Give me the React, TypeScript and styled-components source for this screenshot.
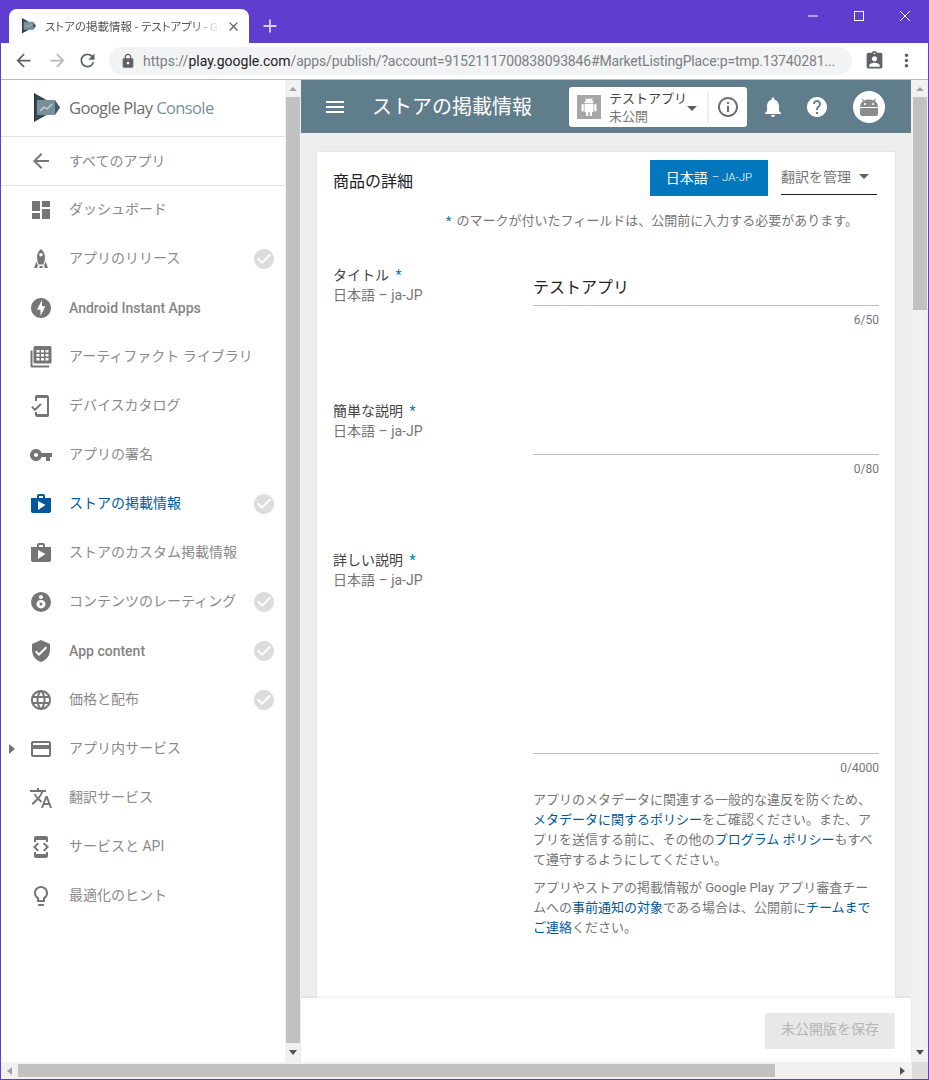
import React from 'react'
import styled, { createGlobalStyle } from 'styled-components'
import {
  MdAdd, MdArrowBack, MdArrowForward, MdAssignmentInd, MdCheckCircle, MdClose,
  MdCreditCard, MdDashboard, MdDeveloperMode, MdHelp, MdInfoOutline, MdLanguage, MdLightbulbOutline,
  MdLock, MdMenu, MdMoreVert, MdNotifications, MdOfflineBolt, MdRefresh, MdShop, MdTranslate,
  MdVerifiedUser, MdVpnKey,
} from 'react-icons/md'

const GlobalStyle = createGlobalStyle`
  html, body { margin: 0; padding: 0; height: 100%; overflow: hidden; }
  body { font-family: Roboto, "Noto Sans CJK JP", sans-serif; font-size: 14px; }
  * { box-sizing: border-box; }
`

const Window = styled.div`
  width: 929px;
  height: 1080px;
  border: 1px solid #5f3dcf;
  display: flex;
  flex-direction: column;
  background: #fff;
  overflow: hidden;
`

const TitleBar = styled.div`
  height: 42px;
  flex: none;
  background: #5f3dcf;
  display: flex;
  align-items: flex-end;
  padding-left: 8px;
`

const Tab = styled.div`
  width: 240px;
  height: 34px;
  background: #fff;
  border-radius: 8px 8px 0 0;
  display: flex;
  align-items: center;
  padding: 0 8px 0 13px;
  color: #5f6368;
`

const TabTitle = styled.div`
  width: 175px;
  margin: 0 6px 0 9px;
  flex: none;
  white-space: nowrap;
  overflow: hidden;
  font-size: 11.5px;
  font-feature-settings: "palt";
  color: #555;
  -webkit-mask-image: linear-gradient(to right, #000 85%, transparent);
  mask-image: linear-gradient(to right, #000 85%, transparent);
`

const NewTab = styled.div`
  width: 42px;
  height: 34px;
  display: flex;
  align-items: center;
  justify-content: center;
  color: #d8d0f4;
  font-size: 22px;
`

const WindowControls = styled.div`
  margin-left: auto;
  align-self: flex-start;
  height: 30px;
  display: flex;
  align-items: center;
  color: #fff;
`

const WindowButton = styled.div`
  width: 46px;
  height: 30px;
  display: flex;
  align-items: center;
  justify-content: center;
`

const Toolbar = styled.div`
  height: 37px;
  flex: none;
  background: #fff;
  border-bottom: 1px solid #b9b9b9;
  display: flex;
  align-items: center;
  padding-bottom: 1px;
`

const NavButton = styled.div<{ $muted?: boolean; $w: number }>`
  width: ${p => p.$w}px;
  display: flex;
  justify-content: center;
  color: ${p => (p.$muted ? '#b8babd' : '#5f6368')};
  font-size: 21px;
  flex: none;
`

const Omnibox = styled.div`
  width: 743px;
  height: 28px;
  margin: 0 4px;
  border-radius: 14px;
  background: #f1f3f4;
  display: flex;
  align-items: center;
  padding-left: 11px;
  gap: 7px;
  font-size: 14px;
  color: #7b7f83;
  white-space: nowrap;
  overflow: hidden;
  flex: none;
`

const Host = styled.span`
  color: #202124;
`

const UrlTail = styled.span`
  letter-spacing: -0.16px;
`

const Viewport = styled.div`
  flex: 1;
  min-height: 0;
  display: flex;
`

const Sidebar = styled.nav`
  width: 284px;
  flex: none;
  background: #fff;
  display: flex;
  flex-direction: column;
`

const LogoRow = styled.div`
  height: 57px;
  flex: none;
  border-bottom: 1px solid #e0e0e0;
  display: flex;
  align-items: center;
  padding: 0 0 1px 33px;
  gap: 9px;
`

const LogoText = styled.div`
  font-family: "Open Sans", sans-serif;
  font-size: 16.5px;
  letter-spacing: -0.6px;
  color: #6d6d6d;
  white-space: nowrap;
`

const LogoAccent = styled.span`
  color: #78909c;
`

const BackRow = styled.div`
  height: 49px;
  flex: none;
  border-bottom: 1px solid #e0e0e0;
  display: flex;
  align-items: center;
  padding: 0 0 1px 28px;
  gap: 16px;
  color: #757575;
  font-size: 14px;
`

const BackLabel = styled.span`
  color: #8a8a8a;
  padding-bottom: 2px;
`

const NavList = styled.div`
  margin-top: -1px;
  display: flex;
  flex-direction: column;
`

const NavRow = styled.div<{ $active?: boolean }>`
  height: 49px;
  flex: none;
  display: flex;
  align-items: center;
  color: ${p => (p.$active ? '#01579b' : '#757575')};
`

const CaretSlot = styled.div`
  width: 28px;
  flex: none;
  display: flex;
  justify-content: flex-start;
  padding-left: 8px;
`

const RightCaret = styled.div`
  width: 0;
  height: 0;
  border-left: 6px solid #757575;
  border-top: 5.5px solid transparent;
  border-bottom: 5.5px solid transparent;
`

const NavIcon = styled.div`
  width: 24px;
  height: 24px;
  flex: none;
  display: flex;
  font-size: 24px;
`

const NavLabel = styled.div<{ $latin?: boolean; $active?: boolean }>`
  margin-left: 16px;
  padding-bottom: ${p => (p.$latin ? 0 : 4)}px;
  flex: 1;
  white-space: nowrap;
  font-size: 14px;
  font-weight: ${p => (p.$latin ? 500 : 400)};
  color: ${p => (p.$active ? '#01579b' : p.$latin ? '#858585' : '#8a8a8a')};
`

const DoneMark = styled.div`
  width: 24px;
  height: 24px;
  margin-right: 9px;
  font-size: 24px;
  color: #dcdcdc;
  display: flex;
`

const VScroll = styled.div<{ $w: number }>`
  width: ${p => p.$w}px;
  flex: none;
  background: #f1f1f1;
  display: flex;
  flex-direction: column;
  align-items: center;
  padding-top: 7px;
`

const UpArrow = styled.div`
  width: 0;
  height: 0;
  flex: none;
  border-left: 4px solid transparent;
  border-right: 4px solid transparent;
  border-bottom: 4px solid #a3a3a3;
`

const DownArrow = styled.div`
  width: 0;
  height: 0;
  flex: none;
  margin-bottom: 7px;
  border-left: 4px solid transparent;
  border-right: 4px solid transparent;
  border-top: 5px solid #505050;
`

const VThumb = styled.div<{ $h: number }>`
  width: 14px;
  height: ${p => p.$h}px;
  flex: none;
  margin-top: 6px;
  background: #c1c1c1;
`

const VSpacer = styled.div`
  flex: 1;
`

const Main = styled.main`
  flex: 1;
  min-width: 0;
  background: #eeeeee;
  display: flex;
  flex-direction: column;
`

const Header = styled.header`
  height: 53px;
  flex: none;
  background: #607d8b;
  display: flex;
  align-items: center;
  padding-left: 22px;
  color: #fff;
`

const HeaderTitle = styled.h1`
  margin: 0 1px 0 25px;
  padding-bottom: 2px;
  width: 196px;
  font-size: 20px;
  font-weight: 400;
  white-space: nowrap;
  color: #fff;
`

const AppChip = styled.div`
  width: 178px;
  height: 40px;
  background: #fff;
  border-radius: 3px;
  display: flex;
  align-items: center;
  padding-left: 8px;
`

const AppThumb = styled.div`
  width: 24px;
  height: 24px;
  background: #a6a6a6;
  color: #fff;
  display: flex;
  align-items: center;
  justify-content: center;
  flex: none;
`

const AppText = styled.div`
  width: 78px;
  margin-left: 8px;
  padding-top: 2px;
  flex: none;
  white-space: nowrap;
  line-height: 18px;
`

const AppName = styled.div`
  font-size: 13px;
  color: #424242;
`

const AppState = styled.div`
  font-size: 13px;
  color: #757575;
`

const DownCaret = styled.div<{ $color: string; $drop?: number }>`
  width: 0;
  height: 0;
  flex: none;
  margin-top: ${p => p.$drop ?? 0}px;
  border-left: 5px solid transparent;
  border-right: 5px solid transparent;
  border-top: 5px solid ${p => p.$color};
`

const ChipDivider = styled.div`
  width: 2px;
  height: 32px;
  background: #eeeeee;
  margin-left: 10px;
  flex: none;
`

const ChipInfo = styled.div`
  font-size: 24px;
  color: #6d6d6d;
  display: flex;
  margin-left: 7px;
`

const HeaderIcon = styled.div<{ $gap: number }>`
  font-size: 24px;
  margin-left: ${p => p.$gap}px;
  display: flex;
  color: #fff;
`

const Avatar = styled.div`
  width: 32px;
  height: 32px;
  border-radius: 50%;
  background: #fff;
  margin-left: 24px;
  color: #8c8c8c;
  display: flex;
  align-items: center;
  justify-content: center;
`

const ContentArea = styled.div`
  flex: 1;
  min-height: 0;
  overflow: hidden;
  padding: 19px 16px 0;
`

const Card = styled.section`
  height: 100%;
  background: #fff;
  box-shadow: 0 0 2px rgba(0, 0, 0, 0.1);
  padding: 8px 16px 0;
`

const CardTop = styled.div`
  display: flex;
  align-items: flex-start;
  height: 36px;
`

const CardTitle = styled.div`
  font-size: 16px;
  color: #212121;
  line-height: 22px;
  margin-top: 11px;
  width: 317px;
`

const LocaleButton = styled.div`
  width: 118px;
  height: 36px;
  padding-bottom: 2px;
  background: #0277bd;
  color: #fff;
  font-size: 14px;
  display: flex;
  align-items: center;
  justify-content: center;
  gap: 4px;
`

const LocaleCode = styled.span`
  font-size: 11.5px;
  font-weight: 300;
`

const ManageSelect = styled.div`
  width: 96px;
  height: 35px;
  margin-left: 13px;
  border-bottom: 1px solid #212121;
  display: flex;
  align-items: center;
  justify-content: space-between;
  padding: 0 8px 2px 0;
  font-size: 14px;
  color: #757575;
`

const RequiredNote = styled.div`
  margin-top: 14px;
  height: 24px;
  padding-right: 21px;
  text-align: right;
  font-size: 13px;
  line-height: 22px;
  color: #757575;
  white-space: nowrap;
`

const Fields = styled.div`
  margin-top: 31px;
  display: flex;
  flex-direction: column;
`

const Field = styled.div`
  display: grid;
  grid-template-columns: 200px 346px;
`

const FieldLabel = styled.div`
  line-height: 20px;
`

const LabelName = styled.div`
  font-size: 14px;
  color: #424242;
`

const Star = styled.span`
  color: #0277bd;
`

const NoteStar = styled(Star)`
  margin-right: 2px;
`

const LabelStar = styled(Star)`
  margin-left: 3px;
`

const LabelLocale = styled.div`
  font-size: 14px;
  color: #757575;
`

const InputBox = styled.div<{ $h: number }>`
  height: ${p => p.$h}px;
  border-bottom: 1px solid #bdbdbd;
  padding-top: 11px;
  font-size: 16px;
  line-height: 24px;
  color: #212121;
`

const Counter = styled.div<{ $tail: number }>`
  height: 20px;
  margin-bottom: ${p => p.$tail}px;
  padding-top: 7px;
  text-align: right;
  font-size: 12px;
  line-height: 15px;
  color: #757575;
`

const HelpParagraph = styled.p`
  margin: 0 0 8px;
  font-size: 13px;
  line-height: 20px;
  color: #757575;
`

const HelpLink = styled.span`
  color: #01579b;
`

const SaveBar = styled.div`
  height: 64px;
  flex: none;
  background: #fff;
  box-shadow: 0 -1px 2px rgba(0, 0, 0, 0.08);
  position: relative;
  display: flex;
  align-items: center;
  justify-content: flex-end;
  padding: 2px 16px 0 0;
`

const SaveButton = styled.div`
  width: 130px;
  height: 36px;
  padding-bottom: 7px;
  background: #e8e8e8;
  border-radius: 2px;
  display: flex;
  align-items: center;
  justify-content: center;
  font-size: 14px;
  color: #b5b5b5;
`

const HScroll = styled.div`
  height: 17px;
  flex: none;
  background: #f1f1f1;
  display: flex;
  align-items: center;
`

const SideArrow = styled.div<{ $dir: 'left' | 'right'; $color: string }>`
  width: 0;
  height: 0;
  flex: none;
  margin: ${p => (p.$dir === 'left' ? '0 6px 0 6px' : '0 0 0 125px')};
  border-top: 4px solid transparent;
  border-bottom: 4px solid transparent;
  ${p => (p.$dir === 'left' ? `border-right: 5px solid ${p.$color};` : `border-left: 5px solid ${p.$color};`)}
`

const HThumb = styled.div`
  width: 757px;
  height: 13px;
  flex: none;
  background: #c1c1c1;
`

const ScrollCorner = styled.div`
  width: 16px;
  height: 17px;
  margin-left: auto;
  background: #dcdcdc;
`

const PlayMark = ({ size }: { size: number }) => (
  <svg width={size} height={(size * 29) / 26} viewBox="0 0 26 29" style={{ flex: 'none' }}>
    <path d="M0 0 L26 14.5 L0 29 Z" fill="#37474f" />
    <path d="M1 1.5 L0 0 L0 29 L1 27 Z" fill="#263238" />
    <rect x="3" y="7" width="18" height="15" fill="#78909c" />
    <path d="M21 7 L26 14.5 L21 22 Z" fill="#455a64" />
    <path d="M6 18 L10 14 L13 16 L18 11" fill="none" stroke="#cfd8dc" strokeWidth="1.2" />
  </svg>
)

const AndroidFull = ({ size }: { size: number }) => (
  <svg width={size} height={size} viewBox="0 0 24 24" fill="currentColor">
    <path d="M6 18c0 .55.45 1 1 1h1v3.500c0 .83.67 1.500 1.500 1.500s1.500-.67 1.500-1.500V19h2v3.500c0 .83.67 1.500 1.500 1.500s1.500-.67 1.500-1.500V19h1c.55 0 1-.45 1-1V8H6v10zM3.500 8C2.670 8 2 8.670 2 9.500v7c0 .83.67 1.500 1.500 1.500S5 17.330 5 16.500v-7C5 8.670 4.330 8 3.500 8zm17 0c-.83 0-1.500.67-1.500 1.500v7c0 .83.67 1.500 1.500 1.500s1.500-.67 1.500-1.500v-7c0-.83-.67-1.500-1.500-1.500zm-4.970-5.840l1.300-1.300c.2-.2.2-.51 0-.71-.2-.2-.51-.2-.71 0l-1.480 1.480C13.850 1.230 12.950 1 12 1c-.96 0-1.860.23-2.660.63L7.850.15c-.2-.2-.51-.2-.71 0-.2.2-.2.51 0 .71l1.310 1.310C6.970 3.260 6 5.010 6 7h12c0-1.990-.97-3.750-2.470-4.840zM10 5H9V4h1v1zm5 0h-1V4h1v1z" />
  </svg>
)

const AndroidBlock = () => (
  <svg width="20" height="20" viewBox="0 0 20 20" fill="currentColor">
    <path d="M1 10c0-2.600 1.300-4.700 3.300-6L3 2.500l.8-.7 1.600 1.700A9 9 0 0 1 10 2.500c1.700 0 3.300.4 4.600 1l1.600-1.700.8.7L15.700 4c2 1.300 3.300 3.400 3.300 6H1z" />
    <path d="M1 11h18v6a2 2 0 0 1-2 2H3a2 2 0 0 1-2-2z" />
    <circle cx="6" cy="7" r="1.100" fill="#fff" />
    <circle cx="14" cy="7" r="1.100" fill="#fff" />
  </svg>
)

const RocketIcon = () => (
  <svg width="24" height="24" viewBox="0 0 24 24" fill="currentColor">
    <path d="M12 2c-2.600 2.200-4 5-4 8.200 0 2.400.5 4.800 1.500 7.300h5c1-2.500 1.500-4.900 1.500-7.300C16 7 14.600 4.200 12 2zm0 7.500a1.800 1.800 0 1 1 0-3.600 1.800 1.800 0 0 1 0 3.600z" />
    <path d="M7.400 14.500 5 21h3.200l.7-2.500zM16.600 14.500 19 21h-3.200l-.7-2.500zM10.500 19h3v2h-3z" />
  </svg>
)

const ArtifactIcon = () => (
  <svg width="24" height="24" viewBox="0 0 24 24" fill="currentColor">
    <path d="M6 1h15a1.500 1.500 0 0 1 1.500 1.500V17a1.500 1.500 0 0 1-1.500 1.500H6A1.500 1.500 0 0 1 4.500 17V2.500A1.500 1.500 0 0 1 6 1z" />
    <path fill="#fff" d="M7.500 5h3v2.500h-3zM12 5h3v2.500h-3zM16.500 5h3v2.500h-3zM7.500 9h3v2.500h-3zM12 9h3v2.500h-3zM16.500 9h3v2.500h-3zM7.500 13h3v2.500h-3zM12 13h3v2.500h-3zM16.500 13h3v2.500h-3z" />
    <path d="M1.500 5.500H3.500V20.500H20V22.500H3A1.500 1.500 0 0 1 1.500 21z" />
  </svg>
)

const DeviceIcon = () => (
  <svg width="24" height="24" viewBox="0 0 24 24" fill="currentColor">
    <path d="M7 1h11a2 2 0 0 1 2 2v18a2 2 0 0 1-2 2H8a2 2 0 0 1-2-2v-3h2v2h10V4H8v3H6V3a2 2 0 0 1 1-2z" />
    <path d="M2.300 13.500 3.600 12.100l2.400 2.400 5.200-5.200 1.400 1.400-6.600 6.600z" />
  </svg>
)

const RatingIcon = () => (
  <svg width="24" height="24" viewBox="0 0 24 24">
    <circle cx="12" cy="12" r="10" fill="currentColor" />
    <circle cx="12" cy="7" r="2.100" fill="#fff" />
    <path d="M12 10c2.800 0 4.500 1.700 4.500 4s-1.700 4.500-4.500 4.500S7.500 16.300 7.500 14 9.200 10 12 10z" fill="#fff" />
    <circle cx="12" cy="14" r="1.500" fill="currentColor" />
  </svg>
)

type NavItem = {
  icon: React.ReactNode
  label: string
  done?: boolean
  latin?: boolean
  active?: boolean
  expandable?: boolean
}

const navItems: NavItem[] = [
  { icon: <MdDashboard />, label: 'ダッシュボード' },
  { icon: <RocketIcon />, label: 'アプリのリリース', done: true },
  { icon: <MdOfflineBolt />, label: 'Android Instant Apps', latin: true },
  { icon: <ArtifactIcon />, label: 'アーティファクト ライブラリ' },
  { icon: <DeviceIcon />, label: 'デバイスカタログ' },
  { icon: <MdVpnKey />, label: 'アプリの署名' },
  { icon: <MdShop />, label: 'ストアの掲載情報', done: true, active: true },
  { icon: <MdShop />, label: 'ストアのカスタム掲載情報' },
  { icon: <RatingIcon />, label: 'コンテンツのレーティング', done: true },
  { icon: <MdVerifiedUser />, label: 'App content', done: true, latin: true },
  { icon: <MdLanguage />, label: '価格と配布', done: true },
  { icon: <MdCreditCard />, label: 'アプリ内サービス', expandable: true },
  { icon: <MdTranslate />, label: '翻訳サービス' },
  { icon: <MdDeveloperMode />, label: 'サービスと API' },
  { icon: <MdLightbulbOutline />, label: '最適化のヒント' },
]

const App = () => (
  <Window>
    <GlobalStyle />
    <TitleBar>
      <Tab>
        <PlayMark size={14} />
        <TabTitle>ストアの掲載情報 - テストアプリ - Google Play Console</TabTitle>
        <MdClose size={15} />
      </Tab>
      <NewTab><MdAdd /></NewTab>
      <WindowControls>
        <WindowButton>
          <svg width="10" height="10" viewBox="0 0 10 10"><path d="M0 5h10" stroke="#fff" /></svg>
        </WindowButton>
        <WindowButton>
          <svg width="10" height="10" viewBox="0 0 10 10"><rect x=".5" y=".5" width="9" height="9" fill="none" stroke="#fff" /></svg>
        </WindowButton>
        <WindowButton>
          <svg width="10" height="10" viewBox="0 0 10 10"><path d="M0 0l10 10M10 0L0 10" stroke="#fff" /></svg>
        </WindowButton>
      </WindowControls>
    </TitleBar>
    <Toolbar>
      <NavButton $w={44}><MdArrowBack /></NavButton>
      <NavButton $w={24} $muted><MdArrowForward /></NavButton>
      <NavButton $w={36}><MdRefresh /></NavButton>
      <Omnibox>
        <MdLock size={16} color="#5f6368" />
        <span>https://<Host>play.google.com</Host><UrlTail>/apps/publish/?account=9152111700838093846#MarketListingPlace:p=tmp.13740281...</UrlTail></span>
      </Omnibox>
      <NavButton $w={36}><MdAssignmentInd /></NavButton>
      <NavButton $w={28}><MdMoreVert /></NavButton>
    </Toolbar>
    <Viewport>
      <Sidebar>
        <LogoRow>
          <PlayMark size={26} />
          <LogoText>Google Play <LogoAccent>Console</LogoAccent></LogoText>
        </LogoRow>
        <BackRow>
          <MdArrowBack size={24} />
          <BackLabel>すべてのアプリ</BackLabel>
        </BackRow>
        <NavList>
          {navItems.map(item => (
            <NavRow key={item.label} $active={item.active}>
              <CaretSlot>{item.expandable && <RightCaret />}</CaretSlot>
              <NavIcon>{item.icon}</NavIcon>
              <NavLabel $latin={item.latin} $active={item.active}>{item.label}</NavLabel>
              {item.done && <DoneMark><MdCheckCircle /></DoneMark>}
            </NavRow>
          ))}
        </NavList>
      </Sidebar>
      <VScroll $w={16}>
        <UpArrow />
        <VThumb $h={946} />
        <VSpacer />
        <DownArrow />
      </VScroll>
      <Main>
        <Header>
          <MdMenu size={24} />
          <HeaderTitle>ストアの掲載情報</HeaderTitle>
          <AppChip>
            <AppThumb><AndroidFull size={18} /></AppThumb>
            <AppText>
              <AppName>テストアプリ</AppName>
              <AppState>未公開</AppState>
            </AppText>
            <DownCaret $color="#616161" $drop={4} />
            <ChipDivider />
            <ChipInfo><MdInfoOutline /></ChipInfo>
          </AppChip>
          <HeaderIcon $gap={14}><MdNotifications /></HeaderIcon>
          <HeaderIcon $gap={20}><MdHelp /></HeaderIcon>
          <Avatar><AndroidBlock /></Avatar>
        </Header>
        <ContentArea>
          <Card>
            <CardTop>
              <CardTitle>商品の詳細</CardTitle>
              <LocaleButton>日本語 <LocaleCode>– JA-JP</LocaleCode></LocaleButton>
              <ManageSelect>翻訳を管理<DownCaret $color="#616161" /></ManageSelect>
            </CardTop>
            <RequiredNote><NoteStar>*</NoteStar> のマークが付いたフィールドは、公開前に入力する必要があります。</RequiredNote>
            <Fields>
              <Field>
                <FieldLabel>
                  <LabelName>タイトル <LabelStar>*</LabelStar></LabelName>
                  <LabelLocale>日本語 – ja-JP</LabelLocale>
                </FieldLabel>
                <div>
                  <InputBox $h={41}>テストアプリ</InputBox>
                  <Counter $tail={75}>6/50</Counter>
                </div>
              </Field>
              <Field>
                <FieldLabel>
                  <LabelName>簡単な説明 <LabelStar>*</LabelStar></LabelName>
                  <LabelLocale>日本語 – ja-JP</LabelLocale>
                </FieldLabel>
                <div>
                  <InputBox $h={54} />
                  <Counter $tail={75}>0/80</Counter>
                </div>
              </Field>
              <Field>
                <FieldLabel>
                  <LabelName>詳しい説明 <LabelStar>*</LabelStar></LabelName>
                  <LabelLocale>日本語 – ja-JP</LabelLocale>
                </FieldLabel>
                <div>
                  <InputBox $h={204} />
                  <Counter $tail={16}>0/4000</Counter>
                  <HelpParagraph>
                    アプリのメタデータに関連する一般的な違反を防ぐため、<HelpLink>メタデータに関するポリシー</HelpLink>をご確認ください。また、アプリを送信する前に、その他の<HelpLink>プログラム ポリシー</HelpLink>もすべて遵守するようにしてください。
                  </HelpParagraph>
                  <HelpParagraph>
                    アプリやストアの掲載情報が Google Play アプリ審査チームへの<HelpLink>事前通知の対象</HelpLink>である場合は、公開前に<HelpLink>チームまでご連絡</HelpLink>ください。
                  </HelpParagraph>
                </div>
              </Field>
            </Fields>
          </Card>
        </ContentArea>
        <SaveBar>
          <SaveButton>未公開版を保存</SaveButton>
        </SaveBar>
      </Main>
      <VScroll $w={17}>
        <UpArrow />
        <VThumb $h={213} />
        <VSpacer />
        <DownArrow />
      </VScroll>
    </Viewport>
    <HScroll>
      <SideArrow $dir="left" $color="#a3a3a3" />
      <HThumb />
      <SideArrow $dir="right" $color="#505050" />
      <ScrollCorner />
    </HScroll>
  </Window>
)

export default App
